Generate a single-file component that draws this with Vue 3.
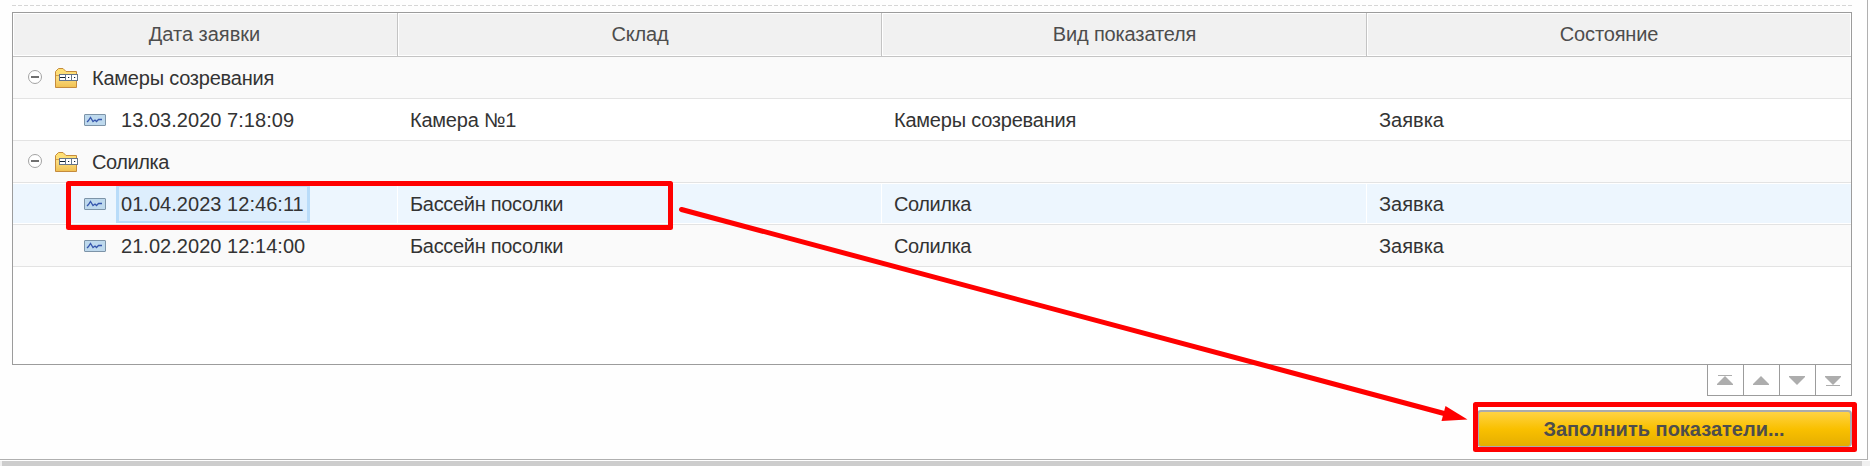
<script setup>
const columns = [
  { text: 'Дата заявки', fit: '' },
  { text: 'Склад', fit: 'snug' },
  { text: 'Вид показателя', fit: 'snug' },
  { text: 'Состояние', fit: 'snug' },
]
const rows = [
  { group: 'Камеры созревания', alt: true },
  { cells: ['13.03.2020 7:18:09', 'Камера №1', 'Камеры созревания', 'Заявка'] },
  { group: 'Солилка', alt: true },
  { cells: ['01.04.2023 12:46:11', 'Бассейн посолки', 'Солилка', 'Заявка'], selected: true },
  { cells: ['21.02.2020 12:14:00', 'Бассейн посолки', 'Солилка', 'Заявка'], alt: true },
]
const fit = {
  'Камеры созревания': 'tight',
  'Камера №1': 'tight',
  'Бассейн посолки': 'tighter',
  'Солилка': 'tightest',
}
const nav = [
  { p: 'M8 1L16 9V10H0V9Z', bar: 0 },
  { p: 'M8 1L16 9V10H0V9Z' },
  { p: 'M0 1H16V2L8 10L0 2Z' },
  { p: 'M0 1H16V2L8 10L0 2Z', bar: 10 },
]
</script>

<template>
  <div class="page">
    <div class="form">
      <svg class="dashes" width="1840" height="1"><line x1="0" y1=".5" x2="1840" y2=".5" stroke="#d6d6d6" stroke-dasharray="4 2" /></svg>
      <div class="table">
        <div class="head">
          <div v-for="c in columns" :key="c.text" class="th"><span :class="c.fit">{{ c.text }}</span></div>
        </div>
        <div v-for="(r, i) in rows" :key="i" class="row" :class="{ alt: r.alt, selected: r.selected }">
          <div v-if="r.group" class="group">
            <svg class="minus" width="14" height="14" viewBox="0 0 14 14">
              <circle cx="7" cy="7" r="6.5" fill="#fff" stroke="#a3a3a3" />
              <path d="M3 7H11" stroke="#707070" stroke-width="2" />
            </svg>
            <svg class="folder" width="24" height="20" viewBox="0 0 24 20">
              <defs>
                <linearGradient id="fold" x1="0" y1="0" x2="0" y2="1"><stop offset="0" stop-color="#ffe070" /><stop offset=".5" stop-color="#fbdc80" /><stop offset="1" stop-color="#f0c050" /></linearGradient>
              </defs>
              <path d="M.5 19.5V3.5L3.5.5H8L11 3.5H21.5V19.5Z" fill="url(#fold)" stroke="#c58b3d" />
              <path d="M1 7.5H5" stroke="#d7a047" />
              <rect x="4.5" y="6.5" width="18" height="6" fill="#fff" stroke="#65758a" />
              <path d="M10.5 7V12M16.5 7V12" stroke="#65758a" />
              <path d="M5 9.5H10M13 9.5H14.2M19 9.5H20.2" stroke="#102030" stroke-width="1.2" />
            </svg>
            <span class="name" :class="fit[r.group]">{{ r.group }}</span>
          </div>
          <template v-else>
            <div v-for="(c, j) in r.cells" :key="j" class="td" :class="{ first: j === 0 }">
              <svg v-if="j === 0" class="record" width="22" height="12" viewBox="0 0 22 12">
                <rect x=".5" y=".5" width="21" height="11" rx=".5" fill="#bed9ed" stroke="#7d94a8" />
                <path d="M3 8L4.5 6.5L6.5 3.5L9 7.5L11 6L12.5 7.5L14.5 5.5H18" fill="none" stroke="#3556ad" stroke-width="1.3" />
              </svg>
              <span class="value" :class="fit[c]">{{ c }}</span>
            </div>
          </template>
        </div>
      </div>
      <div class="nav">
        <button v-for="(n, i) in nav" :key="i" type="button">
          <svg width="16" height="11" viewBox="0 0 16 11">
            <path :d="n.p" fill="#adadad" />
            <rect v-if="n.bar !== undefined" x="1" :y="n.bar" width="14" height="1" fill="#adadad" />
          </svg>
        </button>
      </div>
      <button class="fill" type="button">Заполнить показатели...</button>
    </div>
    <div class="scroll"><div class="thumb"></div></div>
    <svg class="marks" width="1870" height="466">
      <g fill="none" stroke="#f00" stroke-width="5" stroke-linejoin="round">
        <rect x="68.5" y="183.5" width="602" height="44" />
        <rect x="1475.5" y="404.5" width="379" height="45" />
        <path d="M681.5 209.5L1446 414" stroke-linecap="round" />
      </g>
      <path d="M1467.5 419.5L1445.5 406L1441.5 421Z" fill="#f00" />
    </svg>
  </div>
</template>

<style>
body { margin: 0; overflow: hidden; }
</style>
<style scoped>
* { box-sizing: border-box; }
.page { position: relative; width: 1870px; height: 466px; background: #fefefe; font: 20px/24px "Liberation Sans", Arial, sans-serif; color: #333; }
.form { width: 1868px; height: 460px; padding: 5px 15px 0 12px; border-right: 1px solid #b0b0b0; border-bottom: 1px solid #b0b0b0; display: flex; flex-direction: column; }
.form > * { flex: none; }
.dashes { display: block; }
.table { width: 1840px; height: 353px; margin-top: 6px; border: 1px solid #9c9c9c; background: #fff; }
.head, .row { display: grid; grid-template-columns: 385px 484px 485px 484px; }
.head { height: 44px; border-bottom: 1px solid #c4c4c4; }
.th { display: flex; align-items: center; justify-content: center; color: #4d4d4d; background: #f1f1f1; border: 1px solid #fff; box-shadow: -1px 0 #c4c4c4; padding-bottom: 1px; }
.th:first-child { box-shadow: none; padding-right: 2px; }
.row { height: 42px; border-bottom: 1px solid #e3e3e3; }
.alt { background: #fafafa; }
.selected { background: #edf6fe; box-shadow: inset 0 1px #fff, inset 0 -1px #fff; }
.group { grid-column: 1 / -1; display: flex; align-items: center; padding-left: 15px; }
.name { margin-left: 13px; }
.snug { letter-spacing: -.15px; }
.tight { letter-spacing: -.22px; }
.tighter { letter-spacing: -.3px; }
.tightest { letter-spacing: -.45px; }
.minus { margin-bottom: 2px; }
.folder { margin-left: 13px; }
.td { display: flex; align-items: center; padding-left: 12px; }
.td.first { padding-left: 71px; }
.selected .td + .td { box-shadow: -1px 0 #fff; }
.first .value { display: flex; align-items: center; height: 38px; margin-left: 10px; border: 0 solid transparent; border-width: 2px 3px; padding: 0 3px 0 2px; letter-spacing: .04px; }
.selected .first .value { background: #ddeefd; border-color: #b9dcf9; }
.nav { align-self: flex-end; display: flex; width: 145px; height: 31px; border: solid #9c9c9c; border-width: 0 1px 1px; }
.nav button { width: 36px; flex: none; padding: 0 1px 0 0; border: 0; background: #fff; display: flex; align-items: center; justify-content: center; }
.nav button:first-child { width: 35px; }
.nav button + button { border-left: 1px solid #9c9c9c; }
.fill { align-self: flex-end; width: 375px; height: 37px; margin-top: 14px; padding: 0 1px 0 0; border: 2px solid #ababab; border-bottom-width: 1px; border-radius: 4px; background: linear-gradient(#ffd343, #f9c000 50%, #e5ae00); color: #4d4d4d; font: bold 20px/24px "Liberation Sans", Arial, sans-serif; }
.scroll { height: 5px; margin-top: 1px; padding-left: 2px; background: #f0f0f0; }
.thumb { width: 1860px; height: 5px; background: #cdcdcd; }
.marks { position: absolute; left: 0; top: 0; pointer-events: none; }
</style>
